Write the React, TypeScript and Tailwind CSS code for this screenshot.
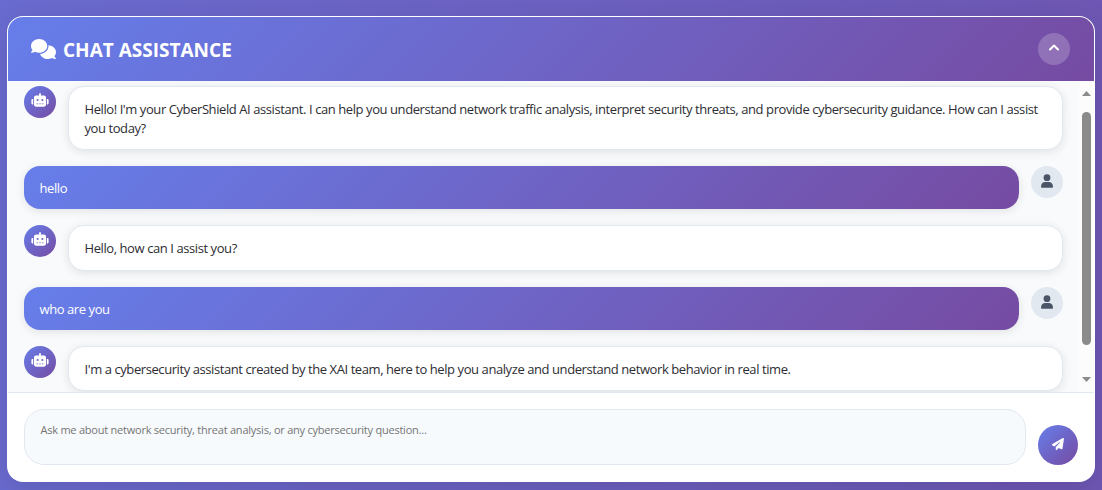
import type { ReactNode } from "react";
import { FaComments, FaPaperPlane } from "react-icons/fa6";

const brand = "bg-[linear-gradient(135deg,#667eea_0%,#764ba2_100%)]";

function RobotIcon() {
  return (
    <svg className="h-[14px] w-[18px] fill-current" viewBox="0 0 18 14">
      <path
        fillRule="evenodd"
        d="M9 0C9.5 0 9.9 0.4 9.9 0.9V2.6H12.8C14.1 2.6 15 3.5 15 4.8V11.6C15 12.9 14.1 13.8 12.8 13.8H5.2C3.9 13.8 3 12.9 3 11.6V4.8C3 3.5 3.9 2.6 5.2 2.6H8.1V0.9C8.1 0.4 8.5 0 9 0ZM6.6 6A1.05 1.05 0 1 0 6.6 8.1A1.05 1.05 0 1 0 6.6 6ZM11.4 6A1.05 1.05 0 1 0 11.4 8.1A1.05 1.05 0 1 0 11.4 6ZM5.5 10.6V11.3H7.1V10.6ZM8.2 10.6V11.3H9.8V10.6ZM10.9 10.6V11.3H12.5V10.6Z"
      />
      <path d="M2.2 6V11.4H1.5C0.9 11.4 0.4 10.9 0.4 10.2V7.2C0.4 6.5 0.9 6 1.5 6ZM15.8 6H16.5C17.1 6 17.6 6.5 17.6 7.2V10.2C17.6 10.9 17.1 11.4 16.5 11.4H15.8Z" />
    </svg>
  );
}

function BotMessage({ children, size }: { children: ReactNode; size: string }) {
  return (
    <div className="flex shrink-0 items-start gap-3">
      <div className={`flex size-8 shrink-0 items-center justify-center rounded-full pb-[4px] text-white ${brand}`}>
        <RobotIcon />
      </div>
      <div className={`min-w-0 flex-1 rounded-2xl border border-[#e2e8f0] bg-white pr-4 pl-[15.5px] pt-[13px] shadow-[0_2px_10px_rgba(0,0,0,0.1)] ${size}`}>
        {children}
      </div>
    </div>
  );
}

function UserMessage({ children }: { children: ReactNode }) {
  return (
    <div className="flex shrink-0 items-start gap-3">
      <div className={`h-[43px] flex-1 rounded-2xl px-[15.5px] pt-[13px] text-white shadow-[0_2px_10px_rgba(0,0,0,0.1)] ${brand}`}>
        {children}
      </div>
      <div className="flex size-8 shrink-0 justify-center rounded-full bg-[#e2e8f0] pt-2 text-[#4a5568]">
        <svg className="h-[14px] w-3 fill-current" viewBox="0 0 12 14">
          <circle cx="6" cy="3.7" r="3.4" />
          <path d="M0 12.7C0 9.7 1.8 8 4.2 8H7.8C10.2 8 12 9.7 12 12.7C12 13.3 11.6 13.7 11.1 13.7H0.9C0.4 13.7 0 13.3 0 12.7Z" />
        </svg>
      </div>
    </div>
  );
}

export default function App() {
  return (
    <main className="h-[490px] w-[1102px] overflow-hidden bg-[linear-gradient(90deg,#6a6bd0_0%,#6e57b4_100%)] pt-4 pl-[7px] font-['Open_Sans',sans-serif]">
      <section className="flex h-[466px] w-[1088px] flex-col overflow-hidden rounded-2xl border border-white/90 bg-white shadow-[0_8px_32px_rgba(0,0,0,0.13)]">
        <header className={`flex h-16 shrink-0 items-center justify-between pr-6 pl-[23px] text-white ${brand}`}>
          <h1 className="flex items-center gap-[7px] text-[19px] leading-6 font-bold">
            <FaComments className="h-5 w-[25px]" />
            <span className="pt-px whitespace-nowrap">CHAT ASSISTANCE</span>
          </h1>
          <button aria-label="Collapse" className="flex size-8 items-center justify-center rounded-full bg-white/20 pb-1">
            <svg className="h-[7px] w-[10px] fill-none stroke-white stroke-2" viewBox="0 0 10 7"><path d="M1 5.5L5 1.5L9 5.5" strokeLinecap="round" strokeLinejoin="round" /></svg>
          </button>
        </header>

        <div className="flex h-[311px] shrink-0 overflow-hidden bg-[#f8fafc]">
          <div className="flex min-w-0 flex-1 flex-col gap-4 px-4 pt-[5px] text-[13px] leading-[19px] tracking-[-0.42px] text-[#2d2d33]">
            <BotMessage size="h-16">
              <p className="whitespace-nowrap">
                Hello! I'm your CyberShield AI assistant. I can help you understand network traffic analysis, interpret security threats, and provide cybersecurity guidance. How can I assist
                <br />
                you today?
              </p>
            </BotMessage>
            <UserMessage>hello</UserMessage>
            <BotMessage size="h-[46px]">Hello, how can I assist you?</BotMessage>
            <UserMessage>who are you</UserMessage>
            <BotMessage size="h-[45px]">
              I'm a cybersecurity assistant created by the XAI team, here to help you analyze and understand network behavior in real time.
            </BotMessage>
          </div>
          <div className="flex w-[15px] flex-col items-center bg-[#fcfcfc] pt-[10px]">
            <svg className="h-[5px] w-[9px] fill-[#8b8b8b]" viewBox="0 0 9 5"><path d="M4.5 0L9 5H0Z" /></svg>
            <div className="mt-4 h-[233px] w-[9px] rounded-full bg-[#8b8b8b]" />
            <svg className="mt-8 h-[5px] w-[9px] fill-[#8b8b8b]" viewBox="0 0 9 5"><path d="M0 0H9L4.5 5Z" /></svg>
          </div>
        </div>

        <footer className="flex flex-1 items-end gap-3 border-t border-[#e2e8f0] bg-white px-4 pb-4">
          <div className="h-14 w-[1002px] rounded-[20px] border border-[#e2e8f0] bg-[#f7fafc] px-[15.5px] pt-[11px] text-[11px] leading-[17px] tracking-[-0.23px] text-[#757575]">
            Ask me about network security, threat analysis, or any cybersecurity question...
          </div>
          <button aria-label="Send" className={`flex size-10 items-center justify-center rounded-full pb-[2px] text-white ${brand}`}>
            <FaPaperPlane className="size-3" />
          </button>
        </footer>
      </section>
    </main>
  );
}
